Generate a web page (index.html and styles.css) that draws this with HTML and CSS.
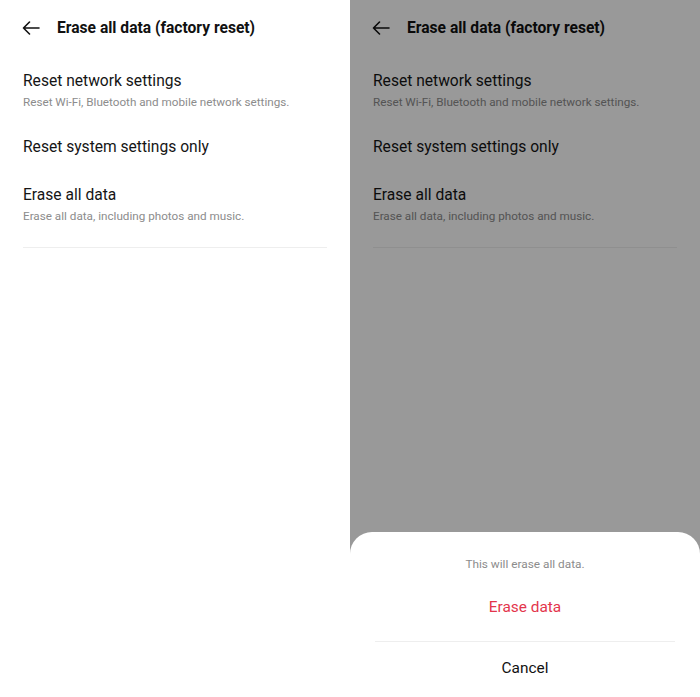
FILE: index.html
```html
<!DOCTYPE html>
<html>
<head>
<meta charset="utf-8">
<link rel="stylesheet" href="styles.css">
</head>
<body>
<div class="screens">
  <section class="panel">
    <header class="bar">
      <svg class="back" width="18" height="14" viewBox="0 0 18 14"><path d="M17 7H1.5M7.5 1L1.5 7l6 6" fill="none" stroke="#111" stroke-width="1.6" stroke-linecap="round" stroke-linejoin="round"/></svg>
      <h1 class="title">Erase all data (factory reset)</h1>
    </header>
    <ul class="list">
      <li class="item"><div class="main">Reset network settings</div><div class="sub">Reset Wi-Fi, Bluetooth and mobile network settings.</div></li>
      <li class="item"><div class="main">Reset system settings only</div></li>
      <li class="item"><div class="main">Erase all data</div><div class="sub">Erase all data, including photos and music.</div></li>
    </ul>
    <div class="rule"></div>
  </section>
  <section class="panel">
    <header class="bar">
      <svg class="back" width="18" height="14" viewBox="0 0 18 14"><path d="M17 7H1.5M7.5 1L1.5 7l6 6" fill="none" stroke="#111" stroke-width="1.6" stroke-linecap="round" stroke-linejoin="round"/></svg>
      <h1 class="title">Erase all data (factory reset)</h1>
    </header>
    <ul class="list">
      <li class="item"><div class="main">Reset network settings</div><div class="sub">Reset Wi-Fi, Bluetooth and mobile network settings.</div></li>
      <li class="item"><div class="main">Reset system settings only</div></li>
      <li class="item"><div class="main">Erase all data</div><div class="sub">Erase all data, including photos and music.</div></li>
    </ul>
    <div class="rule"></div>
    <div class="scrim"></div>
    <div class="sheet">
      <p class="note">This will erase all data.</p>
      <div class="action danger">Erase data</div>
      <div class="sheet-rule"></div>
      <div class="action cancel">Cancel</div>
    </div>
  </section>
</div>
</body>
</html>
```
FILE: styles.css
```css
* { box-sizing: border-box; }
html, body { margin: 0; padding: 0; background: #fff; }
body { font-family: Roboto, "Noto Sans", sans-serif; color: #111; }
.screens { display: flex; width: 700px; height: 697px; }
.panel { position: relative; width: 350px; height: 697px; overflow: hidden; background: #fff; }
.bar { display: flex; align-items: center; height: 55px; padding-left: 22px; }
.back { display: block; margin-right: 17px; }
.title { margin: 0; font-size: 15.6px; font-weight: 700; color: #111; letter-spacing: 0; }
.list { list-style: none; margin: 0; padding: 16px 23px 0; display: flex; flex-direction: column; gap: 28px; }
.item { display: flex; flex-direction: column; }
.main { font-size: 15.6px; line-height: 20px; color: #151515; }
.sub { font-size: 11.7px; line-height: 14px; color: #8c8c8c; margin-top: 4px; }
.rule { height: 1px; background: #eeeeee; margin: 24px 23px 0 23px; }
.scrim { position: absolute; inset: 0; background: rgba(0,0,0,0.4); }
.sheet { position: absolute; left: 0; right: 0; bottom: 0; top: 532px; background: #fff; border-radius: 22px 22px 0 0; padding: 25px 25px 0; display: flex; flex-direction: column; align-items: stretch; }
.note { margin: 0; text-align: center; font-size: 11.8px; line-height: 14px; color: #8c8c8c; }
.action { text-align: center; font-size: 15.4px; line-height: 20px; }
.danger { color: #e3354c; margin-top: 26px; }
.sheet-rule { height: 1px; background: #eeeeee; margin-top: 24px; }
.cancel { color: #111; margin-top: 16px; }
```
